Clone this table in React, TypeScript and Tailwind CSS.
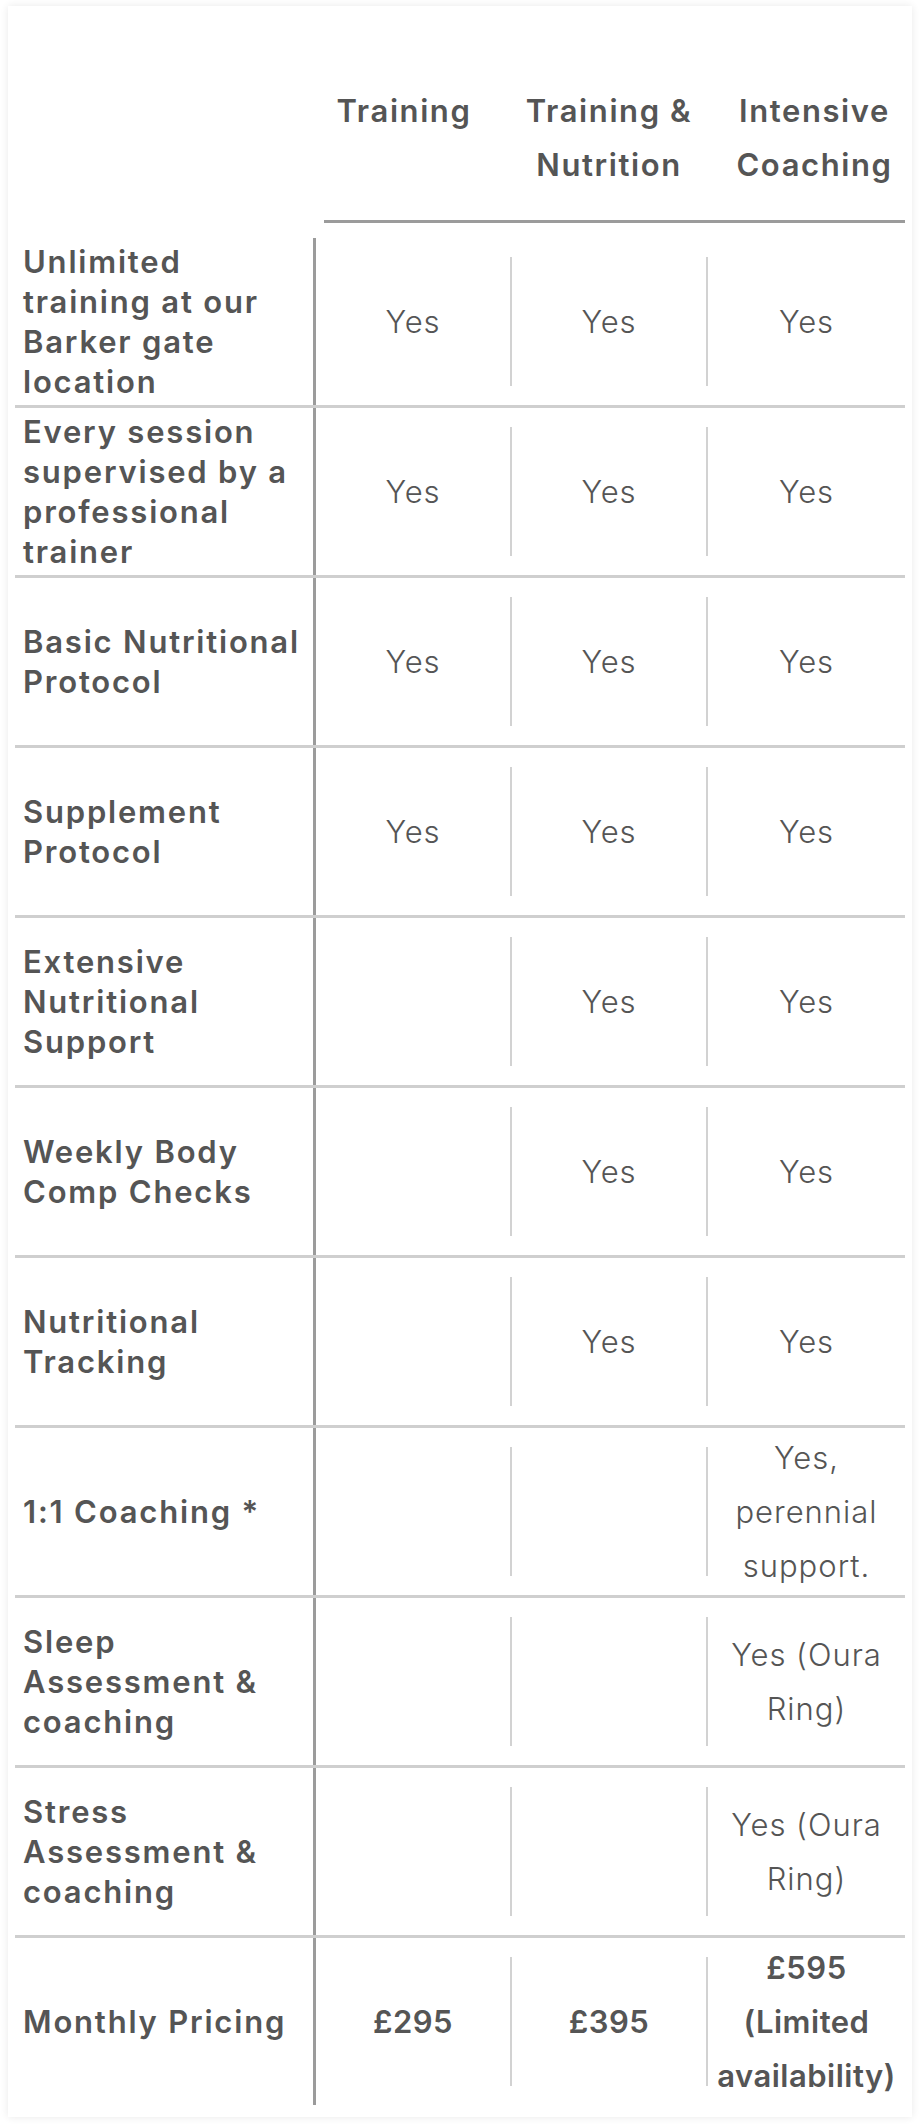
import React from 'react';

type Cell = string | string[];

interface Row {
  label: string[];
  values: Cell[];
  strong?: boolean;
}

const rows: Row[] = [
  { label: ['Unlimited', 'training at our', 'Barker gate', 'location'], values: ['Yes', 'Yes', 'Yes'] },
  { label: ['Every session', 'supervised by a', 'professional', 'trainer'], values: ['Yes', 'Yes', 'Yes'] },
  { label: ['Basic Nutritional', 'Protocol'], values: ['Yes', 'Yes', 'Yes'] },
  { label: ['Supplement', 'Protocol'], values: ['Yes', 'Yes', 'Yes'] },
  { label: ['Extensive', 'Nutritional', 'Support'], values: ['', 'Yes', 'Yes'] },
  { label: ['Weekly Body', 'Comp Checks'], values: ['', 'Yes', 'Yes'] },
  { label: ['Nutritional', 'Tracking'], values: ['', 'Yes', 'Yes'] },
  { label: ['1:1 Coaching *'], values: ['', '', ['Yes,', 'perennial', 'support.']] },
  { label: ['Sleep', 'Assessment &', 'coaching'], values: ['', '', ['Yes (Oura', 'Ring)']] },
  { label: ['Stress', 'Assessment &', 'coaching'], values: ['', '', ['Yes (Oura', 'Ring)']] },
  { label: ['Monthly Pricing'], values: ['£295', '£395', ['£595', '(Limited', 'availability)']], strong: true },
];

const Lines: React.FC<{ cell: Cell }> = ({ cell }) => {
  const lines = Array.isArray(cell) ? cell : cell ? [cell] : [];
  return (
    <div className="text-center whitespace-nowrap">
      {lines.map((l) => (
        <div key={l}>{l}</div>
      ))}
    </div>
  );
};

export default function App() {
  return (
    <div className="min-h-screen bg-white pt-[6px] pl-[8px] font-[Inter,sans-serif] text-[#555555]">
      <div className="w-[904px] bg-white px-[7px] pb-[12px] shadow-[0_0_8px_rgba(0,0,0,0.09)]">
        {/* Header */}
        <div className="flex mb-[15px]">
          <div className="w-[309px] shrink-0" />
          <div className="flex flex-1 h-[217px] items-start border-b-[3px] border-[#9b9b9b] pt-[78px] text-[31px] leading-[54px] font-semibold tracking-[1.6px]">
            <div className="w-[160px] text-center">Training</div>
            <div className="w-[250px] text-center">
              <div>Training &amp;</div>
              <div>Nutrition</div>
            </div>
            <div className="flex-1 pr-[10px] text-center">
              <div>Intensive</div>
              <div>Coaching</div>
            </div>
          </div>
        </div>

        {/* Body */}
        {rows.map((row, i) => {
          const last = i === rows.length - 1;
          const valueText = `text-[31px] leading-[54px] ${
            row.strong ? 'font-semibold tracking-[0.5px]' : 'font-light tracking-[1px]'
          }`;
          return (
            <div
              key={row.label.join(' ')}
              className={`flex ${last ? 'h-[167px]' : 'h-[170px] border-b-[3px] border-[#cfcfcf]'}`}
            >
              {/* Label */}
              <div className="w-[301px] shrink-0 flex items-center border-r-[3px] border-[#9b9b9b] pl-[8px] text-[31px] leading-[40px] font-semibold tracking-[1.8px] whitespace-nowrap">
                <div>
                  {row.label.map((l) => (
                    <div key={l}>{l}</div>
                  ))}
                </div>
              </div>

              {/* Values */}
              <div className={`w-[194px] shrink-0 flex items-center justify-center ${valueText}`}>
                <Lines cell={row.values[0]} />
              </div>
              <div className="w-[196px] shrink-0 flex items-center">
                <div
                  className={`w-full h-[129px] border-l-2 border-[#d2d2d2] flex items-center justify-center ${valueText}`}
                >
                  <Lines cell={row.values[1]} />
                </div>
              </div>
              <div className="flex-1 flex items-center">
                <div
                  className={`w-full h-[129px] border-l-2 border-[#d2d2d2] flex items-center justify-center ${valueText}`}
                >
                  <Lines cell={row.values[2]} />
                </div>
              </div>
            </div>
          );
        })}
      </div>
    </div>
  );
}
